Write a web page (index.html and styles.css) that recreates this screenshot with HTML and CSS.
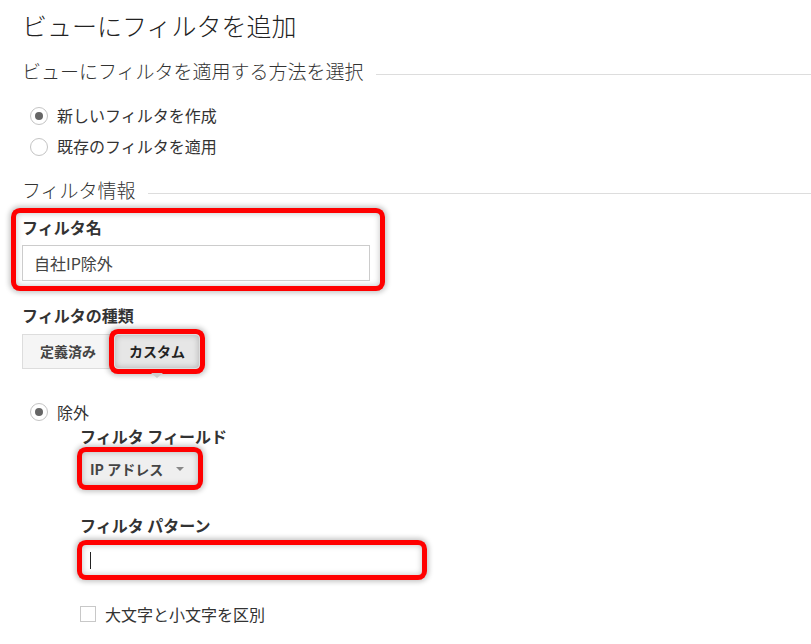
FILE: index.html
```html
<!DOCTYPE html>
<html>
<head>
    <title>ビューにフィルタを追加</title>
    <meta charset="utf-8">
    <link rel="stylesheet" href="styles.css">
</head>
<body>
    <h1 class="title">ビューにフィルタを追加</h1>

    <!-- How to apply -->
    <div class="legend legend-first">ビューにフィルタを適用する方法を選択</div>
    <div class="radios">
        <div class="radio-row"><span class="radio on"></span>新しいフィルタを作成</div>
        <div class="radio-row"><span class="radio"></span>既存のフィルタを適用</div>
    </div>

    <!-- Filter info -->
    <div class="legend legend-second">フィルタ情報</div>
    <div class="name-group mark">
        <div class="label">フィルタ名</div>
        <div class="text-input">自社IP除外</div>
    </div>

    <div class="label type-label">フィルタの種類</div>
    <div class="tabs">
        <div class="tab">定義済み</div>
        <div class="tab active mark">カスタム</div>
    </div>

    <div class="radio-row exclude-row"><span class="radio on"></span>除外</div>
    <div class="sub">
        <div class="label">フィルタ フィールド</div>
        <div class="dropdown mark">IP アドレス<span class="arrow"></span></div>

        <div class="label pattern-label">フィルタ パターン</div>
        <div class="pattern mark"><span class="cursor"></span></div>

        <div class="check-row"><span class="checkbox"></span>大文字と小文字を区別</div>
    </div>
</body>
</html>
```

FILE: styles.css
```css
body {
    margin: 0;
    padding: 0 0 0 22px;
    background: #fff;
    color: #333;
    font-family: "Noto Sans CJK JP", "Noto Sans", sans-serif;
    overflow: hidden;
}

.title {
    margin: 9px 0 0;
    font-size: 25px;
    line-height: 32px;
    font-weight: 300;
    color: #222;
}

.legend {
    display: flex;
    align-items: center;
    gap: 12px;
    font-size: 19px;
    line-height: 24px;
    font-weight: 300;
    color: #333;
}
.legend::after {
    content: "";
    flex: 1;
    border-top: 1px solid #ddd;
    margin-top: 7px;
}
.legend-first {
    margin-top: 18px;
}
.legend-second {
    margin-top: 16px;
}

.radios {
    margin-top: 17px;
}
.radio-row {
    display: flex;
    align-items: center;
    font-size: 16px;
    line-height: 31px;
    color: #333;
}
.radio {
    width: 18px;
    height: 18px;
    margin: 0 9px 0 8px;
    border: 1px solid #c4c4c4;
    border-radius: 50%;
    box-sizing: border-box;
    display: flex;
    align-items: center;
    justify-content: center;
}
.radio.on::after {
    content: "";
    width: 8px;
    height: 8px;
    border-radius: 50%;
    background: #666;
}

/* red annotation frame */
.mark {
    border-radius: 4px;
    box-shadow: 0 0 0 5px #ff0000, 0 0 5px 7px rgba(0, 0, 0, 0.22), inset 0 0 6px rgba(0, 0, 0, 0.25);
}

.label {
    font-size: 16px;
    line-height: 22px;
    font-weight: 700;
    color: #333;
}

.name-group {
    width: 364px;
    box-sizing: border-box;
    margin: 11px 0 0 -6px;
    padding: 3px 10px 5px 6px;
}
.text-input {
    margin-top: 7px;
    height: 36px;
    box-sizing: border-box;
    border: 1px solid #ccc;
    padding-left: 11px;
    font-size: 16px;
    line-height: 34px;
    color: #444;
}

.type-label {
    margin-top: 18px;
}
.tabs {
    display: flex;
    margin-top: 8px;
}
.tab {
    height: 35px;
    box-sizing: border-box;
    padding: 0 17px;
    border: 1px solid #ddd;
    background: #f5f5f5;
    font-size: 14px;
    font-weight: 700;
    line-height: 33px;
    color: #444;
}
.tab.active {
    position: relative;
    padding: 0 14px;
    background: #e6e6e6;
    color: #222;
}
.tab.active::after {
    content: "";
    position: absolute;
    left: 50%;
    top: 38px;
    margin-left: -6px;
    border-left: 6px solid transparent;
    border-right: 6px solid transparent;
    border-top: 5px solid #ccc;
}

.exclude-row {
    margin-top: 30px;
    line-height: 26px;
}

.sub {
    padding-left: 58px;
}
.dropdown {
    display: flex;
    align-items: center;
    width: 116px;
    height: 33px;
    box-sizing: border-box;
    margin: 5px 0 0 2px;
    padding-left: 8px;
    background: #efefef;
    font-size: 14px;
    font-weight: 700;
    color: #444;
}
.arrow {
    margin-left: auto;
    margin-right: 14px;
    border-left: 4px solid transparent;
    border-right: 4px solid transparent;
    border-top: 4px solid #888;
}

.pattern-label {
    margin-top: 29px;
}
.pattern {
    width: 340px;
    height: 30px;
    margin: 9px 0 0 2px;
    background: #fff;
    display: flex;
    align-items: center;
}
.cursor {
    width: 1px;
    height: 17px;
    margin-left: 8px;
    background: #222;
}

.check-row {
    display: flex;
    align-items: center;
    margin-top: 26px;
    font-size: 16px;
    line-height: 26px;
    color: #333;
}
.checkbox {
    width: 16px;
    height: 16px;
    box-sizing: border-box;
    border: 1px solid #c8c8c8;
    margin-right: 9px;
}
```
